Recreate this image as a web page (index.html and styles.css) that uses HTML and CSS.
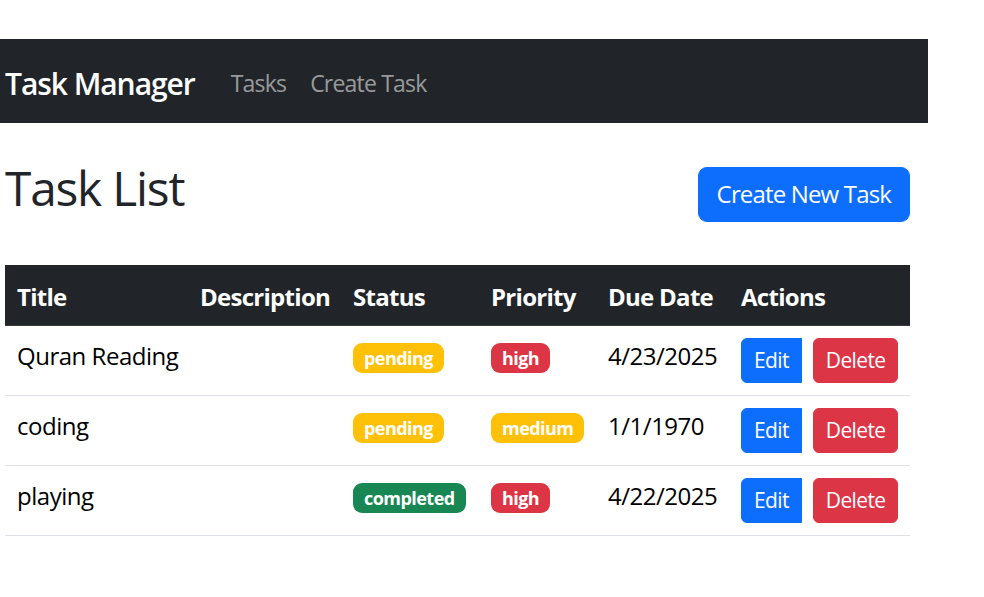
FILE: index.html
```html
<!DOCTYPE html>
<html lang="en">
<head>
<meta charset="utf-8">
<title>Task Manager</title>
<link rel="stylesheet" href="styles.css">
</head>
<body>
<nav class="navbar">
  <a class="brand" href="#">Task Manager</a>
  <ul class="nav">
    <li><a class="nav-link" href="#">Tasks</a></li>
    <li><a class="nav-link" href="#">Create Task</a></li>
  </ul>
</nav>
<main class="container">
  <div class="page-head">
    <h1 class="title">Task List</h1>
    <button class="btn btn-primary btn-lg">Create New Task</button>
  </div>
  <table class="table">
    <colgroup>
      <col class="c-title"><col class="c-desc"><col class="c-status"><col class="c-prio"><col class="c-date"><col class="c-actions">
    </colgroup>
    <thead>
      <tr><th>Title</th><th>Description</th><th>Status</th><th>Priority</th><th>Due Date</th><th>Actions</th></tr>
    </thead>
    <tbody>
      <tr>
        <td>Quran Reading</td><td></td>
        <td><span class="badge bg-warning">pending</span></td>
        <td><span class="badge bg-danger">high</span></td>
        <td>4/23/2025</td>
        <td><div class="actions"><button class="btn btn-sm btn-primary btn-edit">Edit</button><button class="btn btn-sm btn-danger">Delete</button></div></td>
      </tr>
      <tr>
        <td>coding</td><td></td>
        <td><span class="badge bg-warning">pending</span></td>
        <td><span class="badge bg-warning">medium</span></td>
        <td>1/1/1970</td>
        <td><div class="actions"><button class="btn btn-sm btn-primary btn-edit">Edit</button><button class="btn btn-sm btn-danger">Delete</button></div></td>
      </tr>
      <tr>
        <td>playing</td><td></td>
        <td><span class="badge bg-success">completed</span></td>
        <td><span class="badge bg-danger">high</span></td>
        <td>4/22/2025</td>
        <td><div class="actions"><button class="btn btn-sm btn-primary btn-edit">Edit</button><button class="btn btn-sm btn-danger">Delete</button></div></td>
      </tr>
    </tbody>
  </table>
</main>
</body>
</html>
```
FILE: styles.css
```css
* { box-sizing: border-box; }
html, body { margin: 0; padding: 0; background: #fff; }
body {
  font-family: "Open Sans", "Noto Sans", sans-serif;
  font-size: 24px;
  line-height: 1.5;
  color: #212529;
  letter-spacing: -0.02em;
}
.navbar {
  margin-top: 39px;
  width: 928px;
  height: 84px;
  background: #212529;
  display: flex;
  align-items: center;
  padding-left: 5px;
  padding-top: 4px;
}
.brand {
  color: #fff;
  text-decoration: none;
  font-size: 30px;
  font-weight: 600;
  margin-right: 24px;
  letter-spacing: -0.035em;
}
.nav { list-style: none; margin: 0; padding: 0; display: flex; }
.nav-link {
  display: block;
  padding: 0 12px;
  color: rgba(255,255,255,0.55);
  text-decoration: none;
  font-size: 23px;
  letter-spacing: -0.035em;
}
.container { width: 905px; margin-left: 5px; padding-top: 36px; }
.page-head {
  display: flex;
  justify-content: space-between;
  align-items: center;
  margin-bottom: 36px;
}
.title {
  margin: 0 0 12px;
  font-size: 47.8px;
  font-weight: 500;
  line-height: 58px;
  letter-spacing: -0.025em;
}
.btn {
  font-family: inherit;
  border: 1px solid transparent;
  color: #fff;
  cursor: pointer;
  letter-spacing: inherit;
  white-space: nowrap;
}
.btn-lg { font-size: 24px; line-height: 1.5; padding: 8px 18px; border-radius: 9px; height: 55px; letter-spacing: -0.035em; }
.btn-primary { background: #0d6efd; border-color: #0d6efd; }
.btn-danger { background: #dc3545; border-color: #dc3545; }
.btn-sm { font-size: 21px; line-height: 1.5; padding: 6px 12px; border-radius: 6px; height: 45px; letter-spacing: -0.03em; }
.btn-edit { border-radius: 6px 0 0 6px; }
.actions { display: flex; gap: 11px; }
.table { width: 905px; border-collapse: collapse; table-layout: fixed; }
.c-title { width: 183px; }
.c-desc { width: 153px; }
.c-status { width: 138px; }
.c-prio { width: 117px; }
.c-date { width: 133px; }
.c-actions { width: 181px; }
.table th, .table td { padding: 12px; text-align: left; vertical-align: top; white-space: nowrap; }
.table thead th {
  background: #212529;
  color: #fff;
  font-weight: 700;
  height: 60px;
  padding-top: 14px;
  padding-bottom: 10px;
  border-bottom: 1px solid #373b3e;
  letter-spacing: -0.03em;
}
.table tbody td { color: #000; border-bottom: 1px solid #dee2e6; height: 70px; }
.badge {
  display: inline-block;
  font-size: 18px;
  font-weight: 700;
  line-height: 1;
  color: #fff;
  padding: 6px 11px;
  border-radius: 9px;
  vertical-align: baseline;
  letter-spacing: -0.03em;
}
.bg-warning { background: #ffc107; }
.bg-danger { background: #dc3545; }
.bg-success { background: #198754; }
```
